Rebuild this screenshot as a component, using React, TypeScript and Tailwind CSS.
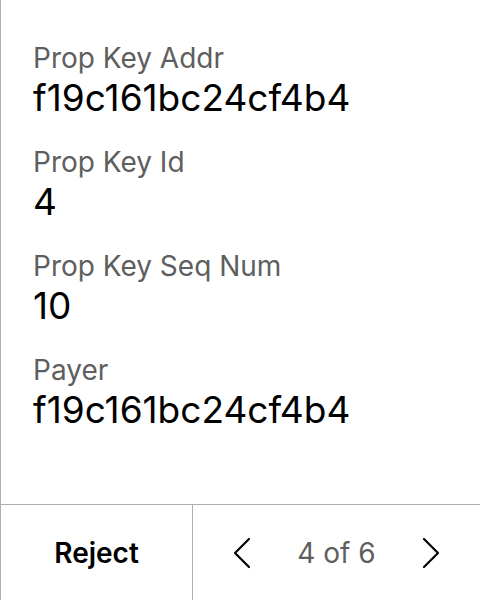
const fields = [
  { label: "Prop Key Addr", value: "f19c161bc24cf4b4" },
  { label: "Prop Key Id", value: "4" },
  { label: "Prop Key Seq Num", value: "10" },
  { label: "Payer", value: "f19c161bc24cf4b4" },
];

function Chevron({ dir }: { dir: "left" | "right" }) {
  return (
    <svg width="18" height="32" viewBox="0 0 18 32" fill="none" stroke="#000" strokeWidth="2.2" strokeLinecap="round" strokeLinejoin="round">
      {dir === "left" ? <path d="M16 2 L2 16 L16 30" /> : <path d="M2 2 L16 16 L2 30" />}
    </svg>
  );
}

export default function App() {
  return (
    <div className="h-[600px] w-[480px] flex flex-col bg-white border-l border-[#b0b0b0] font-['Inter',sans-serif]">
      <div className="flex-1 px-[32px] pt-[40px]">
        {fields.map((f) => (
          <div key={f.label} className="mb-[24px]">
            <div className="text-[28px] leading-[36px] text-[#5e5e5e]">{f.label}</div>
            <div className="text-[37px] leading-[44px] text-black">{f.value}</div>
          </div>
        ))}
      </div>
      <div className="h-[96px] flex border-t border-[#b0b0b0]">
        <div className="w-[192px] flex items-center justify-center border-r border-[#b0b0b0] text-[28px] font-semibold text-black">
          Reject
        </div>
        <div className="flex-1 flex items-center justify-center gap-[46px]">
          <Chevron dir="left" />
          <span className="text-[28px] text-[#5e5e5e]">4 of 6</span>
          <Chevron dir="right" />
        </div>
      </div>
    </div>
  );
}
